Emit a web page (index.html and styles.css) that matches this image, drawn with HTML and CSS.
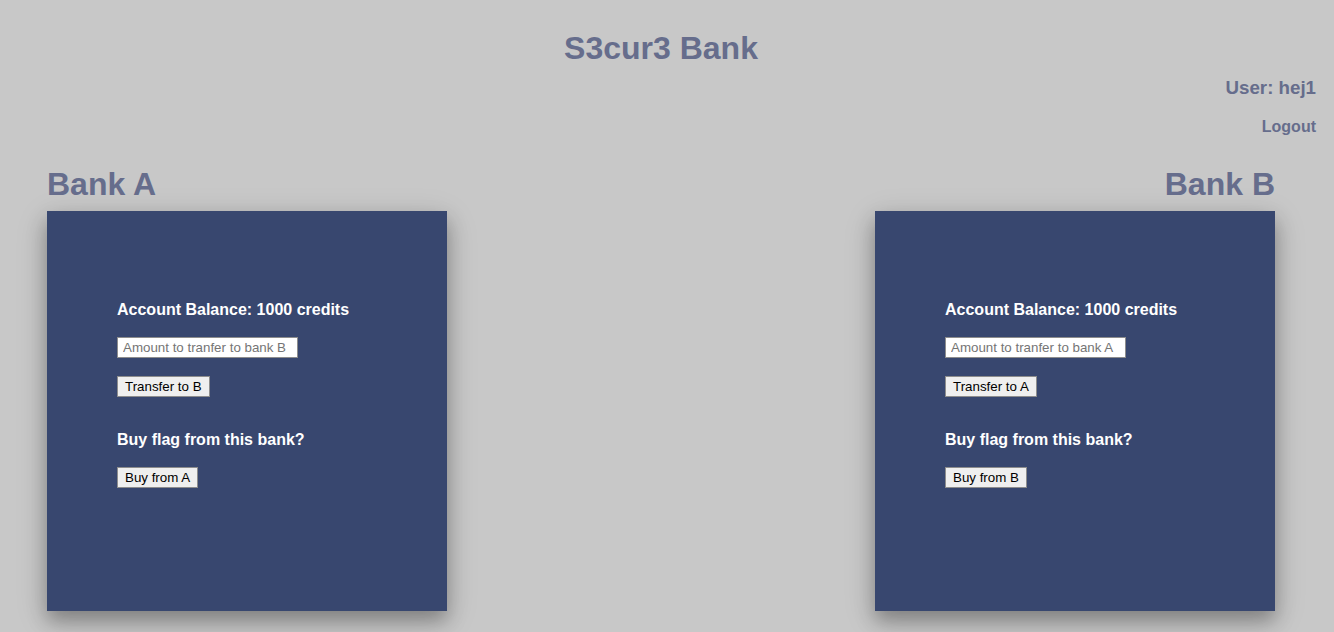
FILE: index.html
```html
<!DOCTYPE html>
<html lang="en">
<head>
<meta charset="utf-8">
<title>S3cur3 Bank</title>
<link rel="stylesheet" href="styles.css">
</head>
<body>
<header class="top">
  <h1 class="title">S3cur3 Bank</h1>
  <div class="user">
    <h3 class="user-name">User: hej1</h3>
    <a class="logout" href="#">Logout</a>
  </div>
</header>
<main class="banks">
  <section class="bank">
    <h2 class="bank-name">Bank A</h2>
    <div class="panel">
      <h4 class="label">Account Balance: 1000 credits</h4>
      <input class="amount" type="text" placeholder="Amount to tranfer to bank B">
      <button class="btn btn-transfer">Transfer to B</button>
      <h4 class="label label-flag">Buy flag from this bank?</h4>
      <button class="btn btn-buy">Buy from A</button>
    </div>
  </section>
  <section class="bank bank-right">
    <h2 class="bank-name">Bank B</h2>
    <div class="panel">
      <h4 class="label">Account Balance: 1000 credits</h4>
      <input class="amount" type="text" placeholder="Amount to tranfer to bank A">
      <button class="btn btn-transfer">Transfer to A</button>
      <h4 class="label label-flag">Buy flag from this bank?</h4>
      <button class="btn btn-buy">Buy from B</button>
    </div>
  </section>
</main>
</body>
</html>
```
FILE: styles.css
```css
html, body {
  margin: 0;
  padding: 0;
  background: #c8c8c8;
  font-family: "Liberation Sans", Arial, sans-serif;
  color: #666d8c;
}

body {
  min-height: 632px;
}

.top {
  padding-top: 30px;
}

.title {
  margin: 0;
  font-size: 32px;
  line-height: 37px;
  font-weight: bold;
  text-align: center;
  padding-right: 12px;
}

.user {
  display: flex;
  flex-direction: column;
  align-items: flex-end;
  padding-right: 18px;
}

.user-name {
  margin: 10px 0 0;
  font-size: 18.72px;
  line-height: 21px;
  font-weight: bold;
}

.logout {
  margin-top: 20px;
  font-size: 16px;
  line-height: 18px;
  font-weight: bold;
  color: #666d8c;
  text-decoration: none;
}

.banks {
  display: flex;
  justify-content: space-between;
  padding: 0 59px 0 47px;
  margin-top: 30px;
}

.bank {
  width: 400px;
}

.bank-right .bank-name {
  text-align: right;
}

.bank-name {
  margin: 0 0 8px;
  font-size: 32px;
  line-height: 37px;
  font-weight: bold;
}

.panel {
  box-sizing: border-box;
  width: 400px;
  height: 400px;
  background: #38476f;
  padding: 90px 70px 0;
  display: flex;
  flex-direction: column;
  align-items: flex-start;
  box-shadow: 0 10px 18px 0 rgba(0, 0, 0, 0.28), 0 8px 32px 0 rgba(0, 0, 0, 0.14);
}

.label {
  margin: 0 0 18px;
  font-size: 16px;
  line-height: 18px;
  font-weight: bold;
  color: #ffffff;
}

.label-flag {
  margin-top: 34px;
}

.amount {
  box-sizing: border-box;
  width: 181px;
  height: 21px;
  margin: 0;
  padding: 1px 5px;
  border: 1px solid #8d8d8d;
  background: #ffffff;
  font-family: "Liberation Sans", Arial, sans-serif;
  font-size: 13.33px;
  color: #000;
  outline: none;
}

.amount::placeholder {
  color: #757575;
}

.btn {
  box-sizing: border-box;
  height: 21px;
  margin: 0;
  padding: 1px 7px;
  border: 1px solid #8d8d8d;
  background: #efefef;
  font-family: "Liberation Sans", Arial, sans-serif;
  font-size: 13.33px;
  line-height: 17px;
  color: #000;
}

.btn-transfer {
  margin-top: 18px;
}
```
